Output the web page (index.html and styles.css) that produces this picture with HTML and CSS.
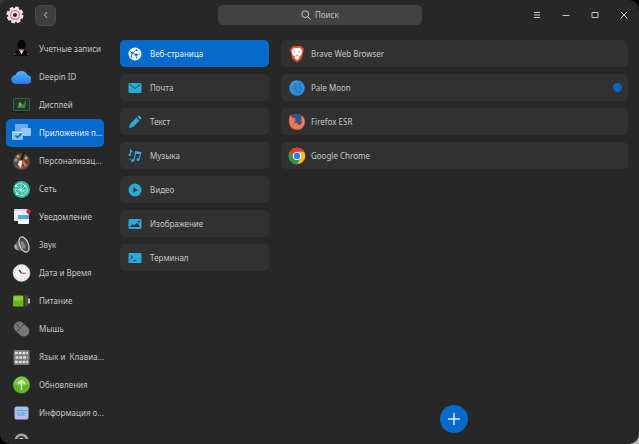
FILE: index.html
```html
<!DOCTYPE html>
<html lang="ru">
<head>
<meta charset="utf-8">
<meta name="viewport" content="width=device-width, initial-scale=1">
<title>Приложения по умолчанию</title>
<link rel="stylesheet" href="styles.css">
</head>
<body>
<div class="window">
  <header class="titlebar">
    <div class="titlebar-start">
      <svg class="logo" viewBox="0 0 18 18" aria-hidden="true">
        <circle cx="9" cy="9" r="7" fill="#e9edf5"/>
        <circle cx="9" cy="9" r="7.500" fill="none" stroke="#e9edf5" stroke-width="2" stroke-dasharray="3.900 1.990"/>
        <circle cx="9" cy="9" r="4.500" fill="#f6e6ec" stroke="#e8798f" stroke-width="1.400"/>
        <circle cx="9" cy="9" r="2" fill="#2b2226"/>
      </svg>
      <button class="back" type="button" aria-label="Назад">
        <svg class="glyph" viewBox="0 0 10 10"><path d="M6.200 2 3.400 5l2.800 3"/></svg>
      </button>
    </div>
    <label class="search">
      <svg class="glyph" viewBox="0 0 10 10" aria-hidden="true"><circle cx="4.200" cy="4.200" r="3.400"/><path d="m6.700 6.700 2.700 2.700"/></svg>
      <input type="text" placeholder="Поиск" aria-label="Поиск">
    </label>
    <div class="controls">
      <button type="button" aria-label="Меню"><svg class="glyph" viewBox="0 0 10 10"><path d="M2 2.500h6M2 5h6M2 7.500h6"/></svg></button>
      <button type="button" aria-label="Свернуть"><svg class="glyph" viewBox="0 0 10 10"><path d="M1.500 5.500h7"/></svg></button>
      <button type="button" aria-label="Развернуть"><svg class="glyph" viewBox="0 0 10 10"><path d="M2 2.500h6v5H2z"/></svg></button>
      <button type="button" aria-label="Закрыть"><svg class="glyph" viewBox="0 0 10 10"><path d="m1.800 1.800 6.400 6.400m0-6.400L1.800 8.200"/></svg></button>
    </div>
  </header>

  <div class="content">
    <nav class="sidebar">
      <a href="#accounts"><svg viewBox="0 0 20 20"><ellipse cx="10.500" cy="6" rx="4" ry="5.500" fill="#050505"/><path d="M3 17q1-6 5-6h5q4 0 5 6z" fill="#080808"/><path d="m8 10.500 2.500 5 2.500-5z" fill="#f2dede"/><path d="m9 10 1.500 1 1.500-1v2l-1.500-1-1.500 1z" fill="#cf2741"/><path d="M3 15h1.500M16 15h1.500" stroke="#b88686"/></svg><span>Учетные записи</span></a>
      <a href="#deepin"><svg viewBox="0 0 20 20"><defs><linearGradient id="cloud" x2="0" y2="1"><stop stop-color="#55b7ff"/><stop offset="1" stop-color="#2878ee"/></linearGradient></defs><path d="M5 17a4.500 4.500 0 0 1-.5-9 6.300 6.300 0 0 1 11.800 0A4.500 4.500 0 0 1 16 17z" fill="url(#cloud)"/></svg><span>Deepin ID</span></a>
      <a href="#display"><svg viewBox="0 0 20 20"><rect x="2.500" y="3.500" width="16" height="12" rx="1" fill="#163a2d" stroke="#4c5852"/><path d="m6 13 2-6 4 3 3-5-1 8z" fill="#43833a"/><path d="m8 7 3 2-2 3z" fill="#8bc34a"/><path d="M6 17h9" stroke="#111"/></svg><span>Дисплей</span></a>
      <a href="#defaults" class="active" aria-current="page"><svg viewBox="0 0 20 20"><rect x="4" y="1" width="13" height="9" rx="1" fill="#6fa9e6"/><rect x="10" y="5" width="10" height="8" rx="1" fill="#98c6f3"/><rect x="1" y="8" width="11" height="9" rx="1" fill="#83c3f5"/><path d="M1.500 9.500h10" stroke="#c4e4ff"/><path d="m4.500 12.500 2 2 4-4" fill="none" stroke="#1263b5" stroke-width="1.500"/></svg><span>Приложения п...</span></a>
      <a href="#personal"><svg viewBox="0 0 20 20"><circle cx="10.500" cy="10.500" r="8.500" fill="#674538"/><path d="M3 14q7 5 14-1a8 8 0 0 1-14 1" fill="#8e604b"/><circle cx="5" cy="9" r="1.700" fill="#5eaad3"/><circle cx="7" cy="5.500" r="1.600" fill="#d99a42"/><circle cx="15" cy="7" r="1.500" fill="#bdbb70"/><path d="m13 1-3 9" stroke="#161616" stroke-width="2"/><path d="M8 10q4-2 3 2l-1 5-3-3z" fill="#f1e9e5"/><path d="m12 9 4 5-2 2-3-5z" fill="#d8704b"/></svg><span>Персонализац...</span></a>
      <a href="#network"><svg viewBox="0 0 20 20"><circle cx="10.500" cy="10.500" r="8.500" fill="#36b9a8"/><path d="m5 6 5-2 5 3 2 5-5 5-6-2-2-5 6 1 4-4M10 4v6l-4 5m4-4 5 3m-3 3-2-6-5-5m5 5 7 1" fill="none" stroke="#a6f1d8" stroke-width=".8"/><g fill="#d2fff0"><circle cx="10" cy="11" r="1"/><circle cx="14" cy="7" r="1"/><circle cx="6" cy="15" r="1"/><circle cx="5" cy="7" r="1"/></g></svg><span>Сеть</span></a>
      <a href="#notice"><svg viewBox="0 0 20 20"><rect x="3" y="2" width="14" height="12" rx="1" fill="#e7f1fc"/><path d="M3 3h14" stroke="#a9cdeb"/><rect x="7" y="7" width="11" height="10" rx="1" fill="#f5fbff"/><path d="M7 8h11v4H7z" fill="#4ba8ec"/><circle cx="17.500" cy="4.500" r="2.200" fill="#dc2341"/></svg><span>Уведомление</span></a>
      <a href="#sound"><svg viewBox="0 0 20 20"><path d="m3 11 6-8 7 14-11-2z" fill="#686868"/><path d="m3 11 2-2 2 6-3-1z" fill="#b0b0b0"/><ellipse cx="13" cy="9.500" rx="4.300" ry="8" transform="rotate(-24 13 9.500)" fill="#4a4a4a" stroke="#d4d4d4" stroke-width="1.200"/><ellipse cx="12" cy="10" rx="2" ry="4" transform="rotate(-24 12 10)" fill="#888"/></svg><span>Звук</span></a>
      <a href="#time"><svg viewBox="0 0 20 20"><circle cx="10.500" cy="10" r="8.500" fill="#f5f5f5" stroke="#c9c9c9" stroke-width=".6"/><circle cx="10.500" cy="10" r="6.800" fill="none" stroke="#8a8a8a" stroke-dasharray=".6 2.960"/><path d="m8 7 2.500 3" stroke="#333" stroke-width="1.200"/><path d="M10 10.200h5" stroke="#d94451"/></svg><span>Дата и Время</span></a>
      <a href="#power"><svg viewBox="0 0 20 20"><rect x="2" y="4.500" width="15" height="11" rx="2" fill="#4c4f4a"/><rect x="2" y="4.500" width="11" height="11" rx="1.500" fill="#69b51d"/><path d="M3 5.500h9v4H3z" fill="#8bd337"/><path d="M13 5v10" stroke="#171d12"/><path d="M17 7.500h2v5h-2z" fill="#bfc3c0"/></svg><span>Питание</span></a>
      <a href="#mouse"><svg viewBox="0 0 20 20"><g transform="rotate(-48 10.500 10)"><rect x="5" y="1.500" width="11" height="17" rx="5.500" fill="#777"/><path d="M5 8.500h11M10.500 2v6" stroke="#3d3d3d" stroke-width=".8"/></g></svg><span>Мышь</span></a>
      <a href="#keyboard"><svg viewBox="0 0 20 20"><rect x="2.500" y="3" width="16" height="15" rx="1" fill="#777"/><g fill="none" stroke="#e1e1e1" stroke-width="2.600" stroke-dasharray="2.800 1"><path d="M4 6h13M4.500 10.500h12M4 15h13"/></g></svg><span>Язык и&nbsp; Клавиа...</span></a>
      <a href="#updates"><svg viewBox="0 0 20 20"><circle cx="10.500" cy="10" r="8.500" fill="#5cb529"/><path d="M3 9a7.500 7.500 0 0 1 15 0q-7 3-15 0" fill="#79c947"/><path d="M10.500 15V6m-3.500 3 3.500-3.500L14 9" fill="none" stroke="#efffe2" stroke-width="1.400"/></svg><span>Обновления</span></a>
      <a href="#system"><svg viewBox="0 0 20 20"><defs><linearGradient id="info" x2="0" y2="1"><stop stop-color="#91cbf2"/><stop offset="1" stop-color="#c0baf0"/></linearGradient></defs><rect x="3.500" y="3.500" width="14" height="13" rx="2" fill="url(#info)"/><path d="M5.500 7.500h10M5.500 10h3m1 0h6M6 12h8" stroke="#517fbd" stroke-width=".7"/></svg><span>Информация о...</span></a>
      <a href="#boot" aria-label="Загрузка"><svg viewBox="0 0 20 20"><circle cx="10.500" cy="9.500" r="7" fill="#a4a4a4"/><circle cx="10.500" cy="9.500" r="4.500" fill="#3a3a3a"/><circle cx="10.500" cy="9.500" r="2.500" fill="#e6e6e6"/></svg></a>
    </nav>

    <nav class="cards categories">
      <a href="#web" class="card active" aria-current="true"><svg viewBox="0 0 14 14"><circle cx="7" cy="7" r="6.500" fill="#fff"/><path d="m2 4 2.500 2L8 8l4-1M4.500 6l4-3M8 8l1 4M4 6l-1 4" fill="none" stroke="#0869ce" stroke-width=".7"/><g fill="#0869ce"><circle cx="4.300" cy="6" r="1.200"/><circle cx="8" cy="8" r="1.400"/><circle cx="8.700" cy="3.200" r="1"/><circle cx="3.500" cy="10" r=".8"/></g></svg><span>Веб-страница</span></a>
      <a href="#mail" class="card"><svg viewBox="0 0 14 14"><rect x=".5" y="2" width="13" height="10" rx="1.500" fill="#29add8"/><path d="m2 3.500 5 4 5-4" fill="none" stroke="#263d46"/></svg><span>Почта</span></a>
      <a href="#text" class="card"><svg viewBox="0 0 14 14"><path d="m1 13 1-4 6.500-6.500 3 3L5 12zM9.300 1.700l.9-.9q.8-.6 1.600.2l1.200 1.200q.8.8.2 1.600l-.9.9z" fill="#29add8"/></svg><span>Текст</span></a>
      <a href="#music" class="card"><svg viewBox="0 0 14 14"><g fill="none" stroke="#29add8"><path d="M2.500 6V1l2 2M6 11l1.500-7 5 .5-1.300 5" stroke-width="1.200"/></g><g fill="#29add8"><circle cx="1.800" cy="6" r="1.300"/><circle cx="4.700" cy="11.500" r="1.600"/><circle cx="10" cy="10.500" r="1.600"/><path d="m7 2 6.500 1-.6 2.200-6.300-1z"/><circle cx="2" cy="10" r=".8"/></g></svg><span>Музыка</span></a>
      <a href="#video" class="card"><svg viewBox="0 0 14 14"><circle cx="7" cy="7" r="6.500" fill="#29add8"/><path d="m5.300 4.300 4.500 2.700-4.500 2.700z" fill="#21323a"/></svg><span>Видео</span></a>
      <a href="#image" class="card"><svg viewBox="0 0 14 14"><rect x=".5" y="2" width="13" height="10" rx="1.500" fill="#29add8"/><path d="m2 10 2.500-3L6 8.500l3-3 3 4.500z" fill="#21323a"/><circle cx="11" cy="4.500" r=".9" fill="#21323a"/></svg><span>Изображение</span></a>
      <a href="#terminal" class="card"><svg viewBox="0 0 14 14"><rect x=".5" y="2" width="13" height="10" rx="1" fill="#29add8"/><path d="m2.500 4.500 2.300 1.800-2.300 1.800M5.500 9.500h3" fill="none" stroke="#21323a"/></svg><span>Терминал</span></a>
    </nav>

    <main class="apps">
      <div class="cards" role="group" aria-label="Веб-страница">
        <button type="button" class="card app"><svg viewBox="0 0 18 18"><path d="m5 1h8l3 3-.5 2L13.500 14 9 17.500 4.500 14 2.500 6 2 4z" fill="#e64f29"/><path d="m9 3 3-.2L14.500 6l-1.300 4-2 1.500.3 1.500L9 15l-2.500-2 .3-1.500-2-1.500L3.500 6 6 2.800z" fill="#fff"/><path d="m5.500 6.500 2 .8M12.500 6.500l-2 .8M7.500 11 9 10l1.500 1" stroke="#e64f29" stroke-width=".8" fill="none"/></svg><span>Brave Web Browser</span></button>
        <button type="button" class="card app"><svg viewBox="0 0 18 18"><circle cx="9" cy="9" r="7.800" fill="#308fd8"/><path d="m5 4 3 2-1 3-3 1m9-6-2 3 3 3-3 4-4-2 2-3" fill="none" stroke="#1e70b5" stroke-width="1.500" opacity=".6"/><path d="M3 6q2-4 6-4" fill="none" stroke="#58b1ec"/></svg><span>Pale Moon</span><i class="dot"></i></button>
        <button type="button" class="card app"><svg viewBox="0 0 18 18"><circle cx="9" cy="9" r="8" fill="#e66b4a"/><path d="M3 1q2 1 5 0 4-1 6 3l-1 3 1 3q-2 4-6 3 3-1 2-3l-4-.5 2-2-3-1z" fill="#31548f"/><path d="M1 7 2 2l3 3 3 .5-2 2q-1 3 2 4 4 2 7-3 0 7-6 7-6 0-8-8.500" fill="#f07857"/><path d="M14 4q3 3 1 8" fill="none" stroke="#ed9a5c"/></svg><span>Firefox ESR</span></button>
        <button type="button" class="card app"><svg viewBox="0 0 18 18"><circle cx="9" cy="9" r="8.300" fill="#fbc116"/><path d="M1.800 4.850A8.300 8.300 0 0 1 16.200 4.850H9L5.400 11.100z" fill="#e33b2e"/><path d="M1.800 4.850 5.400 11.100 9 13.150l3.600-2.050L9 17.300A8.300 8.300 0 0 1 1.800 4.850" fill="#279847"/><circle cx="9" cy="9" r="4.100" fill="#fff"/><circle cx="9" cy="9" r="3.200" fill="#317ee4"/></svg><span>Google Chrome</span></button>
      </div>
      <button class="add" type="button" aria-label="Добавить"><svg viewBox="0 0 14 14"><path d="M7 1v12M1 7h12" stroke="#dcecff" stroke-width="1.500"/></svg></button>
    </main>
  </div>
</div>
</body>
</html>
```
FILE: styles.css
```css
* {
  box-sizing: border-box;
}

body {
  margin: 0;
  background: linear-gradient(135deg, #4a3438 0, #000 16px, #000 60%, #b8b8b8 100%);
  color: #c3c6cb;
  font: 8px/12px "Noto Sans", sans-serif;
}

.window {
  display: flex;
  flex-direction: column;
  height: 100vh;
  padding-bottom: 5px;
  overflow: hidden;
  border-radius: 10px;
  background: #272727;
}

button,
input {
  padding: 0;
  border: 0;
  background: none;
  color: inherit;
  font: inherit;
}

a {
  color: inherit;
  text-decoration: none;
}

svg {
  display: block;
  flex: none;
}

.glyph {
  width: 10px;
  height: 10px;
  fill: none;
  stroke: #c8c8c8;
  stroke-width: 1;
}

.titlebar {
  display: grid;
  grid-template-columns: 1fr 204px 1fr;
  align-items: center;
  flex: none;
  height: 30px;
  padding: 0 5px 0 6px;
}

.titlebar-start {
  display: flex;
  align-items: center;
  gap: 11px;
}

.logo {
  width: 18px;
  height: 18px;
}

.back {
  display: grid;
  place-items: center;
  width: 21px;
  height: 21px;
  border: 1px solid #4a4a4a;
  border-radius: 5px;
  background: #3e3e3e;
}

.search {
  display: flex;
  align-items: center;
  justify-content: center;
  gap: 4px;
  height: 20px;
  border-radius: 5px;
  background: #434343;
}

.search input {
  width: 24px;
  outline: none;
}

.search input::placeholder {
  color: #bfc1c4;
  opacity: 1;
}

.controls {
  display: flex;
  justify-content: flex-end;
  gap: 9px;
}

.controls button {
  display: grid;
  place-items: center;
  width: 20px;
  height: 20px;
}

.content {
  display: grid;
  grid-template-columns: 98px 12fr 25fr;
  flex: 1;
  min-height: 0;
  padding: 0 11px 0 6px;
}

.sidebar {
  padding-top: 5px;
  overflow: hidden;
}

.sidebar a {
  display: flex;
  align-items: center;
  gap: 8px;
  height: 28px;
  padding-left: 5px;
  border-radius: 5px;
  white-space: nowrap;
}

.sidebar svg {
  width: 20px;
  height: 20px;
}

.sidebar .active,
.card.active {
  background: #0669cc;
  color: #e6f0fb;
}

.cards {
  display: flex;
  flex-direction: column;
  gap: 7px;
}

.categories {
  padding: 10px 5px 0 16px;
}

.card {
  display: flex;
  align-items: center;
  gap: 8px;
  height: 27px;
  padding: 0 8px;
  border-radius: 5px;
  background: #313131;
  text-align: left;
}

.card svg {
  width: 14px;
  height: 14px;
}

.app {
  gap: 5px;
  padding: 0 6px 0 7px;
}

.app svg {
  width: 18px;
  height: 18px;
}

.apps {
  display: flex;
  flex-direction: column;
  justify-content: space-between;
  padding: 10px 0 6px 7px;
}

.dot {
  width: 9px;
  height: 9px;
  margin-left: auto;
  border-radius: 50%;
  background: #0b68bf;
}

.add {
  display: grid;
  place-items: center;
  align-self: center;
  width: 28px;
  height: 28px;
  border-radius: 50%;
  background: #0669cc;
}

.add svg {
  width: 14px;
  height: 14px;
}
```
